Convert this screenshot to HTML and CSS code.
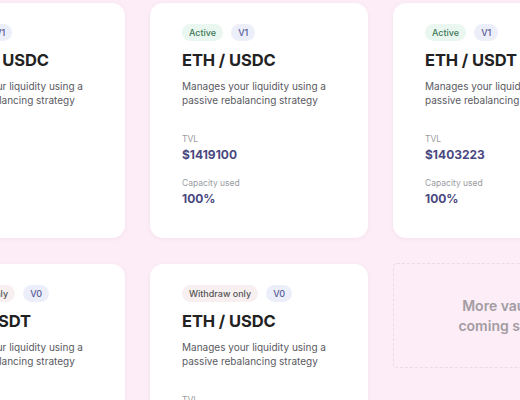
FILE: index.html
```html
<!DOCTYPE html>
<html>
<head>
<meta charset="utf-8">
<link rel="stylesheet" href="styles.css">
</head>
<body>
<div class="grid">
  <div class="card">
    <div class="badges"><span class="pill pill-active">Active</span><span class="pill pill-ver">V1</span></div>
    <h2 class="title">WBTC / USDC</h2>
    <p class="desc">Manages your liquidity using a passive rebalancing strategy</p>
    <div class="stat"><div class="label">TVL</div><div class="value">$1380551</div></div>
    <div class="stat"><div class="label">Capacity used</div><div class="value">100%</div></div>
  </div>
  <div class="card">
    <div class="badges"><span class="pill pill-active">Active</span><span class="pill pill-ver">V1</span></div>
    <h2 class="title">ETH / USDC</h2>
    <p class="desc">Manages your liquidity using a passive rebalancing strategy</p>
    <div class="stat"><div class="label">TVL</div><div class="value">$1419100</div></div>
    <div class="stat"><div class="label">Capacity used</div><div class="value">100%</div></div>
  </div>
  <div class="card">
    <div class="badges"><span class="pill pill-active">Active</span><span class="pill pill-ver">V1</span></div>
    <h2 class="title">ETH / USDT</h2>
    <p class="desc">Manages your liquidity using a passive rebalancing strategy</p>
    <div class="stat"><div class="label">TVL</div><div class="value">$1403223</div></div>
    <div class="stat"><div class="label">Capacity used</div><div class="value">100%</div></div>
  </div>
  <div class="card">
    <div class="badges"><span class="pill pill-withdraw">Withdraw only</span><span class="pill pill-ver">V0</span></div>
    <h2 class="title">ETH / USDT</h2>
    <p class="desc">Manages your liquidity using a passive rebalancing strategy</p>
    <div class="stat"><div class="label">TVL</div><div class="value">$0</div></div>
    <div class="stat"><div class="label">Capacity used</div><div class="value">0%</div></div>
  </div>
  <div class="card">
    <div class="badges"><span class="pill pill-withdraw">Withdraw only</span><span class="pill pill-ver">V0</span></div>
    <h2 class="title">ETH / USDC</h2>
    <p class="desc">Manages your liquidity using a passive rebalancing strategy</p>
    <div class="stat"><div class="label">TVL</div><div class="value">$0</div></div>
    <div class="stat"><div class="label">Capacity used</div><div class="value">0%</div></div>
  </div>
  <div class="soon">More vaults<br>coming soon</div>
</div>
</body>
</html>
```
FILE: styles.css
```css
html, body {
  margin: 0;
  padding: 0;
  background: #fcedf6;
  overflow: hidden;
  width: 520px;
  height: 400px;
  font-family: Inter, "Noto Sans", sans-serif;
}
.grid {
  display: grid;
  grid-template-columns: repeat(3, 218px);
  column-gap: 25px;
  row-gap: 26px;
  margin-left: -93px;
  margin-top: 3px;
  align-items: start;
}
.card {
  background: #fff;
  border-radius: 13px;
  box-shadow: 0 1px 4px rgba(200, 150, 180, 0.12);
  padding: 21px 31px 34px 32px;
  height: 235px;
  box-sizing: border-box;
}
.badges {
  display: flex;
  gap: 8px;
}
.pill {
  font-size: 9px;
  font-weight: 500;
  line-height: 17px;
  height: 17px;
  padding: 0 7px;
  border-radius: 9px;
}
.pill-active {
  background: #eaf7f0;
  color: #3e7757;
}
.pill-ver {
  background: #eceefa;
  color: #585c96;
}
.pill-withdraw {
  background: #f8f0f0;
  color: #555;
}
.title {
  margin: 8px 0 0;
  font-size: 16.5px;
  font-weight: 650;
  color: #222;
  line-height: 22px;
  letter-spacing: -0.1px;
}
.desc {
  margin: 8px 0 0;
  font-size: 10px;
  line-height: 14px;
  color: #5a5a62;
}
.stat {
  margin-top: 27px;
}
.stat + .stat {
  margin-top: 16px;
}
.label {
  font-size: 8.5px;
  color: #9a9aa2;
  line-height: 11px;
}
.value {
  margin-top: 3px;
  font-size: 12px;
  font-weight: 700;
  color: #4a4880;
  line-height: 14px;
}
.soon {
  height: 105px;
  margin-top: -1px;
  border: 1.5px dashed #f0d9e6;
  border-radius: 4px;
  box-sizing: border-box;
  display: flex;
  align-items: center;
  justify-content: center;
  text-align: center;
  font-size: 14px;
  font-weight: 600;
  line-height: 20px;
  color: #a39ca3;
}
```
